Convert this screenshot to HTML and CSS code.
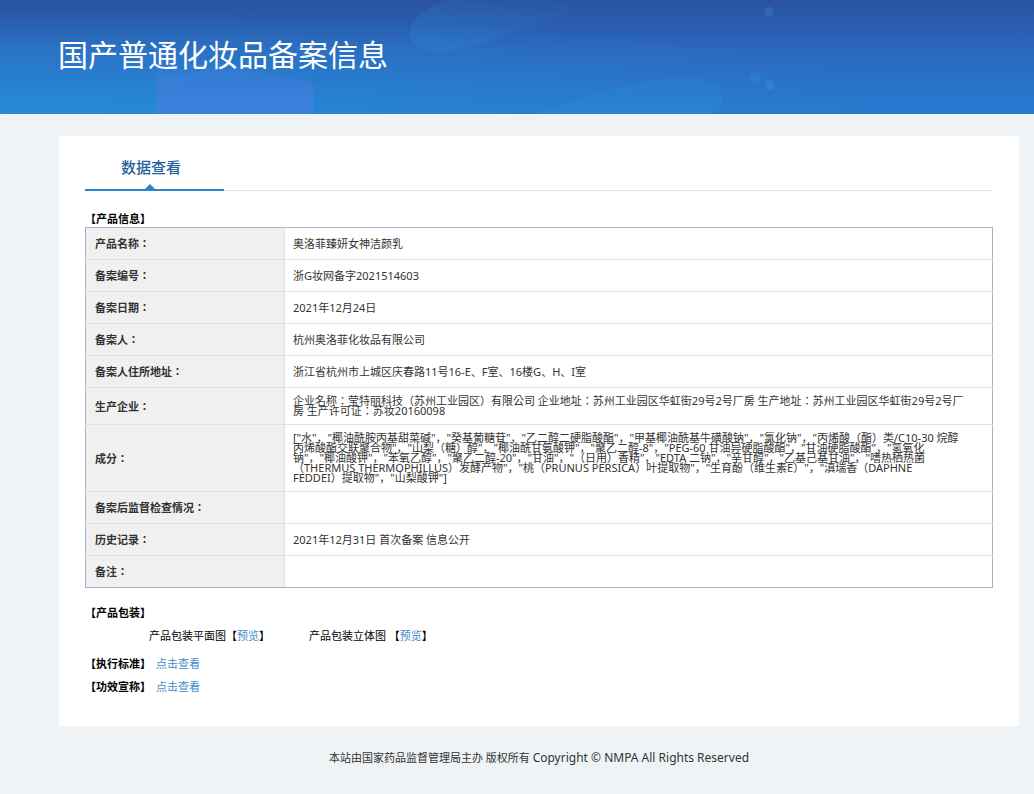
FILE: index.html
```
<!DOCTYPE html>
<html lang="zh-CN">
<head>
<meta charset="utf-8">
<title>国产普通化妆品备案信息</title>
<link rel="stylesheet" href="styles.css">
</head>
<body>
<header class="banner">
  <svg class="banner-art" viewBox="0 0 1034 114" preserveAspectRatio="none" aria-hidden="true">
    <defs>
      <linearGradient id="sky" x1="0" y1="0" x2="0" y2="1">
        <stop offset="0" stop-color="#28539f"/>
        <stop offset="0.45" stop-color="#2c69bf"/>
        <stop offset="1" stop-color="#2879d0"/>
      </linearGradient>
      <radialGradient id="glow" cx="0" cy="1" r="0.9">
        <stop offset="0" stop-color="#2492da" stop-opacity="0.75"/>
        <stop offset="0.5" stop-color="#2492da" stop-opacity="0.3"/>
        <stop offset="1" stop-color="#2492da" stop-opacity="0"/>
      </radialGradient>
      <linearGradient id="box" x1="0" y1="0" x2="0" y2="1">
        <stop offset="0" stop-color="#3c7cd8" stop-opacity="0"/>
        <stop offset="0.5" stop-color="#3c7cd8" stop-opacity="0.9"/>
        <stop offset="1" stop-color="#3c82dc"/>
      </linearGradient>
      <linearGradient id="blob" x1="0" y1="1" x2="1" y2="0">
        <stop offset="0" stop-color="#2f86d2" stop-opacity="0.35"/>
        <stop offset="1" stop-color="#2f86d2" stop-opacity="0"/>
      </linearGradient>
      <linearGradient id="wave" x1="0" y1="0" x2="0" y2="1">
        <stop offset="0" stop-color="#2b80d4" stop-opacity="0.3"/>
        <stop offset="1" stop-color="#2b86d8" stop-opacity="0.6"/>
      </linearGradient>
    </defs>
    <rect width="1034" height="114" fill="url(#sky)"/>
    <rect width="1034" height="114" fill="url(#glow)"/>
    <path d="M156 60L265 72L313 83V114H156Z" fill="url(#box)"/>
    <path d="M450 0C425 7 410 20 410 34C410 48 426 52 445 51C475 49 505 35 550 20L595 0Z" fill="url(#blob)"/>
    <path d="M535 114C600 92 640 78 692 77C715 78 724 93 722 103Q719 111 711 114Z" fill="url(#wave)"/>
    <circle cx="769" cy="12" r="5" fill="#2f68b8"/>
    <circle cx="755" cy="78" r="6" fill="#2a7cd0"/>
    <circle cx="770" cy="85" r="5" fill="#2f80d8"/>
  </svg>
  <h1 class="banner-title">国产普通化妆品备案信息</h1>
</header>

<main class="card">
  <nav class="tabs"><a class="tab" href="#data">数据查看</a></nav>

  <section id="data">
    <h2 class="section-title">【产品信息】</h2>
    <table class="info">
      <tr><th scope="row">产品名称<span class="colon" lang="zh-Hant">：</span></th><td>奥洛菲臻妍女神洁颜乳</td></tr>
      <tr><th scope="row">备案编号<span class="colon" lang="zh-Hant">：</span></th><td>浙G妆网备字2021514603</td></tr>
      <tr><th scope="row">备案日期<span class="colon" lang="zh-Hant">：</span></th><td>2021年12月24日</td></tr>
      <tr><th scope="row">备案人<span class="colon" lang="zh-Hant">：</span></th><td>杭州奥洛菲化妆品有限公司</td></tr>
      <tr><th scope="row">备案人住所地址<span class="colon" lang="zh-Hant">：</span></th><td>浙江省杭州市上城区庆春路11号16-E、F室、16楼G、H、I室</td></tr>
      <tr><th scope="row">生产企业<span class="colon" lang="zh-Hant">：</span></th><td lang="zh-Hant">企业名称：莹特丽科技（苏州工业园区）有限公司 企业地址：苏州工业园区华虹街29号2号厂房 生产地址：苏州工业园区华虹街29号2号厂<br>房 生产许可证：苏妆20160098</td></tr>
      <tr><th scope="row">成分<span class="colon" lang="zh-Hant">：</span></th><td>["水"，"椰油酰胺丙基甜菜碱"，"癸基葡糖苷"，"乙二醇二硬脂酸酯"，"甲基椰油酰基牛磺酸钠"，"氯化钠"，"丙烯酸（酯）类/C10-30 烷醇<br>丙烯酸酯交联聚合物"，"山梨（糖）醇"，"椰油酰甘氨酸钾"，"聚乙二醇-8"，"PEG-60 甘油异硬脂酸酯"，"甘油硬脂酸酯"，"氢氧化<br>钠"，"椰油酸钾"，"苯氧乙醇"，"聚乙二醇-20"，"甘油"，"（日用）香精"，"EDTA 二钠"，"辛甘醇"，"乙基己基甘油"，"嗜热栖热菌<br>（THERMUS THERMOPHILLUS）发酵产物"，"桃（PRUNUS PERSICA）叶提取物"，"生育酚（维生素E）"，"滇瑞香（DAPHNE<br>FEDDEI）提取物"，"山梨酸钾"]</td></tr>
      <tr><th scope="row">备案后监督检查情况<span class="colon" lang="zh-Hant">：</span></th><td></td></tr>
      <tr><th scope="row">历史记录<span class="colon" lang="zh-Hant">：</span></th><td>2021年12月31日 首次备案 信息公开</td></tr>
      <tr><th scope="row">备注<span class="colon" lang="zh-Hant">：</span></th><td></td></tr>
    </table>
  </section>

  <section class="package">
    <h2 class="section-title">【产品包装】</h2>
    <div class="previews">
      <span>产品包装平面图【<a href="#flat">预览</a>】</span>
      <span>产品包装立体图 【<a href="#solid">预览</a>】</span>
    </div>
  </section>

  <div class="extra"><h2 class="section-title">【执行标准】</h2><a href="#standard">点击查看</a></div>
  <div class="extra"><h2 class="section-title">【功效宣称】</h2><a href="#claims">点击查看</a></div>
</main>

<footer class="footer">本站由国家药品监督管理局主办 版权所有 <span class="copyright">Copyright © NMPA All Rights Reserved</span></footer>
</body>
</html>
```
FILE: styles.css
```
* { box-sizing: border-box; }

body {
  margin: 0;
  background: #eff3f6;
  color: #000;
  font: 11px/23px "Noto Sans", "Noto Sans CJK SC", sans-serif;
}

a { color: #428bca; text-decoration: none; }

.banner {
  position: relative;
  height: 114px;
  padding: 32px 58px;
}

.banner-art {
  position: absolute;
  inset: 0;
  width: 100%;
  height: 100%;
}

.banner-title {
  position: relative;
  margin: 0;
  color: #fff;
  font-size: 30px;
  font-weight: 400;
  line-height: 46px;
}

.card {
  margin: 22px 15px 0 59px;
  padding: 15px 26px 28px;
  background: #fff;
}

.tabs {
  display: flex;
  border-bottom: 1px solid #e0e3e6;
}

.tab {
  position: relative;
  width: 139px;
  height: 40px;
  margin-bottom: -1px;
  padding-left: 36px;
  border-bottom: 2px solid #2a84c8;
  color: #1f609e;
  font-size: 15px;
  font-weight: 500;
  line-height: 32px;
}

.tab::after {
  content: "";
  position: absolute;
  left: 60px;
  bottom: 0;
  border: 5px solid transparent;
  border-top: 0;
  border-bottom-color: #2a84c8;
}

.section-title {
  margin: 0;
  font-size: 11px;
  font-weight: 700;
}

#data { padding-top: 16px; }
#data .section-title { height: 20px; }

.info {
  width: 100%;
  border: 1px solid #9fb5d0;
  border-collapse: collapse;
  color: #333;
  line-height: 10px;
}

.info tr { height: 32px; }

.info th,
.info td {
  padding: 8px;
  border: 1px solid #dde1e5;
  text-align: left;
}

.info th {
  width: 199px;
  padding: 9px 9px 8px;
  background: #f0f0f0;
  font-weight: 700;
}

.info tr > :first-child { border-left-color: #9fb5d0; }
.info tr > :last-child { border-right-color: #9fb5d0; }
.info tr:first-child > * { border-top-color: #9fb5d0; }
.info tr:last-child > * { border-bottom-color: #9fb5d0; }

.colon { line-height: 0; }

.package {
  padding: 13px 0 5px;
}

.previews {
  display: flex;
  gap: 39px;
  padding-left: 64px;
}

.extra {
  display: flex;
  gap: 5px;
}

.footer {
  padding: 20px 15px 25px 59px;
  color: #333;
  text-align: center;
}

.copyright { font-size: 12px; }
```
